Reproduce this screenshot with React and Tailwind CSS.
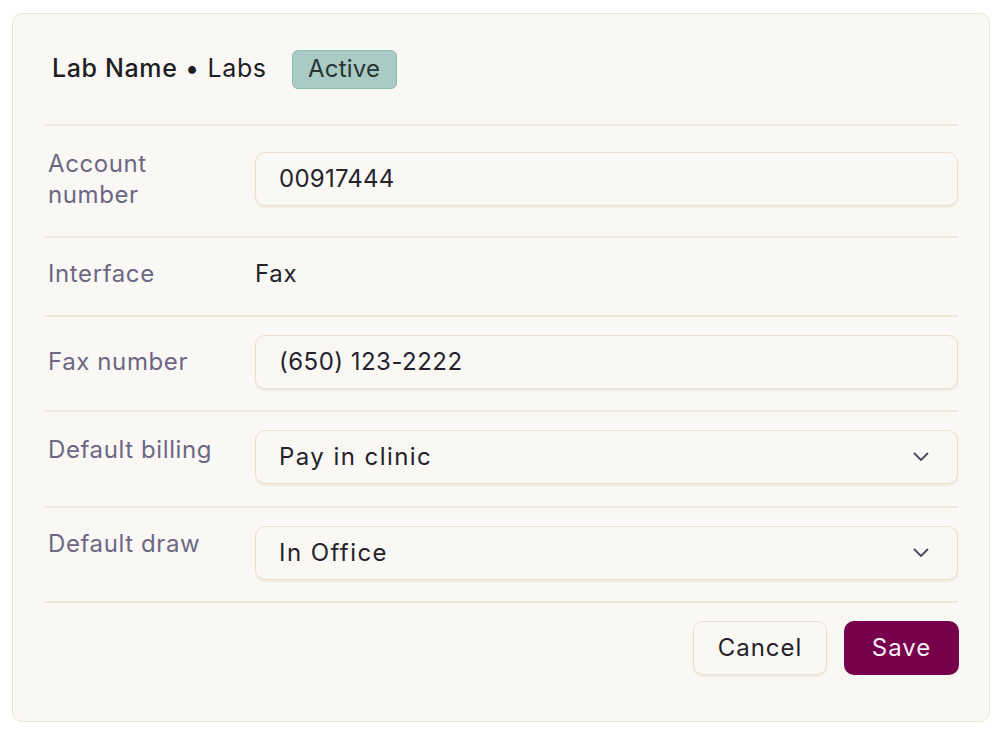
import React from "react";

const font = { fontFamily: "Inter, 'Open Sans', sans-serif" };

function Chevron() {
  return (
    <svg width="16" height="10" viewBox="0 0 16 10" fill="none">
      <path d="M1.5 1.5 L8 8 L14.5 1.5" stroke="#4d4862" strokeWidth="1.8" strokeLinecap="round" strokeLinejoin="round" />
    </svg>
  );
}

function Field({ children, select, tracking }) {
  return (
    <div className="flex h-[54px] w-[703px] items-center justify-between rounded-[10px] border-[1.5px] border-[#ecdfcd] bg-[#f9f8f4] pl-[23px] pr-[28px] text-[24px] text-[#25222b] shadow-[0_2px_2px_rgba(150,120,80,0.10)]">
      <span className={tracking}>{children}</span>
      {select ? <Chevron /> : null}
    </div>
  );
}

function Label({ children, mt }) {
  return (
    <div className={`w-[211px] shrink-0 pl-[4px] text-[24px] leading-[31px] tracking-[0.025em] text-[#6d6784] ${mt}`}>{children}</div>
  );
}

export default function App() {
  return (
    <div className="min-h-[736px] w-[1000px] bg-white pt-[13px] pl-[12px]" style={font}>
      <div className="h-[709px] w-[978px] rounded-[10px] border border-[#ebe4d8] bg-[#f9f8f4] px-[31px]">
        <div className="flex h-[110px] items-center pl-[8px]">
          <span className="text-[25px] tracking-[0.025em] text-[#1f1d24]">
            <span className="font-medium">Lab Name</span> • Labs
          </span>
          <span className="ml-[25px] flex h-[39px] w-[105px] items-center justify-center rounded-[6px] border-[1.5px] border-[#8fbab1] bg-[#a9cbc4] text-[24px] tracking-[0.01em] text-[#2a3533]">
            Active
          </span>
        </div>

        <div className="flex h-[112px] border-t-2 border-[#efe7dc]">
          <Label mt="mt-[22px]">
            Account
            <br />
            number
          </Label>
          <div className="mt-[26px]">
            <Field tracking="tracking-[0.01em]">00917444</Field>
          </div>
        </div>

        <div className="flex h-[79px] border-t-2 border-[#efe7dc]">
          <Label mt="mt-[20px]">Interface</Label>
          <div className="mt-[20px] text-[24px] leading-[31px] tracking-[0.03em] text-[#25222b]">Fax</div>
        </div>

        <div className="flex h-[95px] border-t-2 border-[#efe7dc]">
          <Label mt="mt-[29px]">Fax number</Label>
          <div className="mt-[18px]">
            <Field tracking="tracking-[0.02em]">(650) 123-2222</Field>
          </div>
        </div>

        <div className="flex h-[96px] border-t-2 border-[#efe7dc]">
          <Label mt="mt-[22px]">Default billing</Label>
          <div className="mt-[18px]">
            <Field select tracking="tracking-[0.06em]">Pay in clinic</Field>
          </div>
        </div>

        <div className="flex h-[95px] border-t-2 border-[#efe7dc]">
          <Label mt="mt-[20px]">Default draw</Label>
          <div className="mt-[18px]">
            <Field select tracking="tracking-[0.06em]">In Office</Field>
          </div>
        </div>

        <div className="flex justify-end gap-[17px] border-t-2 border-[#efe7dc] pt-[18px]">
          <button className="flex h-[54px] w-[134px] items-center justify-center rounded-[10px] border-[1.5px] border-[#ecdfcd] bg-[#f9f8f4] text-[24px] tracking-[0.04em] text-[#25222b] shadow-[0_2px_2px_rgba(150,120,80,0.10)]">
            Cancel
          </button>
          <button className="mr-[-1px] flex h-[54px] w-[115px] items-center justify-center rounded-[10px] bg-[#76004b] text-[24px] tracking-[0.04em] text-[#f8eef3]">
            Save
          </button>
        </div>
      </div>
    </div>
  );
}
